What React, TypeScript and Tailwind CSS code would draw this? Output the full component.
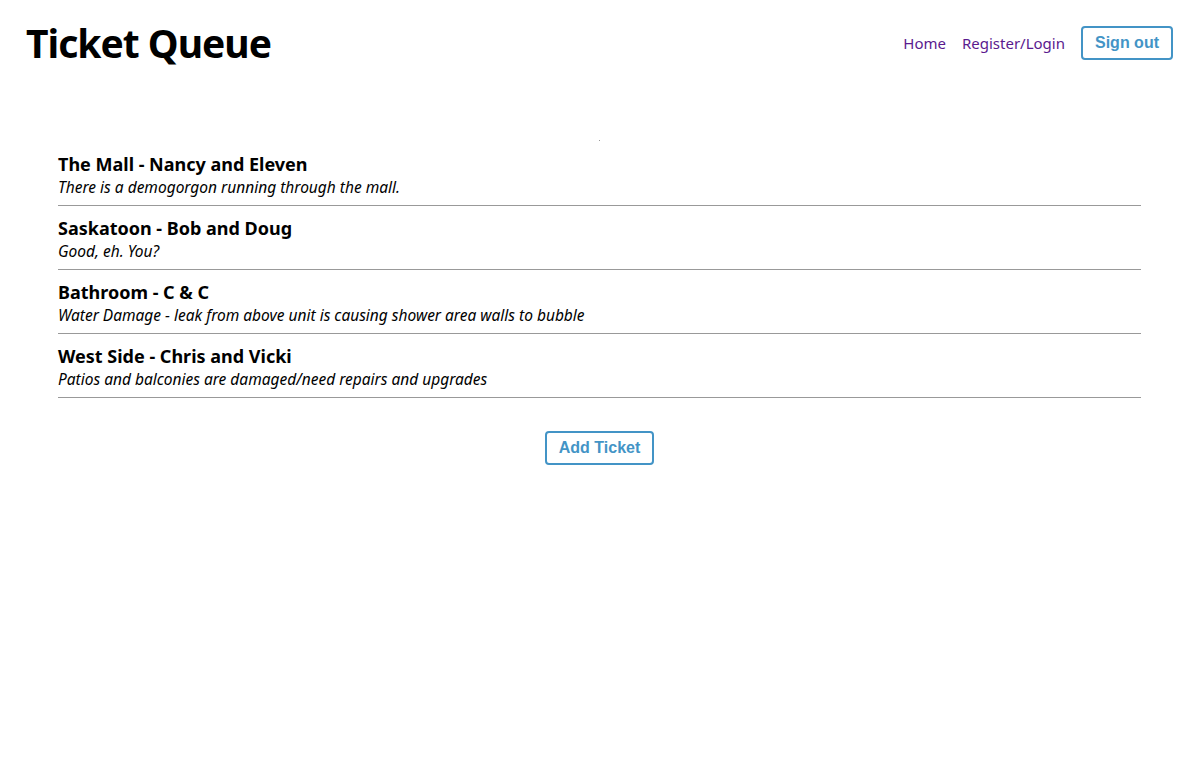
import React from "react";

const tickets = [
  { title: "The Mall - Nancy and Eleven", desc: "There is a demogorgon running through the mall." },
  { title: "Saskatoon - Bob and Doug", desc: "Good, eh. You?" },
  { title: "Bathroom - C & C", desc: "Water Damage - leak from above unit is causing shower area walls to bubble" },
  { title: "West Side - Chris and Vicki", desc: "Patios and balconies are damaged/need repairs and upgrades" },
];

export default function App() {
  return (
    <div className="min-h-[775px] w-full bg-white text-black" style={{ fontFamily: '"Noto Sans", sans-serif' }}>
      <header className="flex items-center justify-between pl-[26px] pr-[22px] pt-[11px] h-[88px] pb-[13px]">
        <h1 className="text-[39px] font-bold leading-[48px] tracking-[-1px] m-0">Ticket Queue</h1>
        <nav className="flex items-center">
          <a className="text-[15px] text-[#5a1a8e] mr-[16px]">Home</a>
          <a className="text-[15px] text-[#5a1a8e] mr-[16px]">Register/Login</a>
          <button
            className="h-[34px] w-[92px] rounded-[4px] border-2 border-[#4394c6] bg-white text-[16px] font-bold text-[#4394c6]"
            style={{ fontFamily: '"Liberation Sans", Arial, sans-serif' }}
          >
            Sign out
          </button>
        </nav>
      </header>
      <main className="ml-[58px] w-[1083px] pt-[52px]">
        <div className="flex justify-center h-[2px]">
          <div className="w-[1px] h-[1px] bg-[#999]" />
        </div>
        <ul>
          {tickets.map((t) => (
            <li key={t.title} className="border-b border-[#999] pt-[10px] pb-[7px]">
              <h3 className="text-[18px] font-bold leading-[24px]">{t.title}</h3>
              <p className="text-[15.5px] italic leading-[22px]">{t.desc}</p>
            </li>
          ))}
        </ul>
        <div className="flex justify-center pt-[33px]">
          <button
            className="h-[34px] w-[109px] rounded-[4px] border-2 border-[#4394c6] bg-white text-[16px] font-bold text-[#4394c6]"
            style={{ fontFamily: '"Liberation Sans", Arial, sans-serif' }}
          >
            Add Ticket
          </button>
        </div>
      </main>
    </div>
  );
}
